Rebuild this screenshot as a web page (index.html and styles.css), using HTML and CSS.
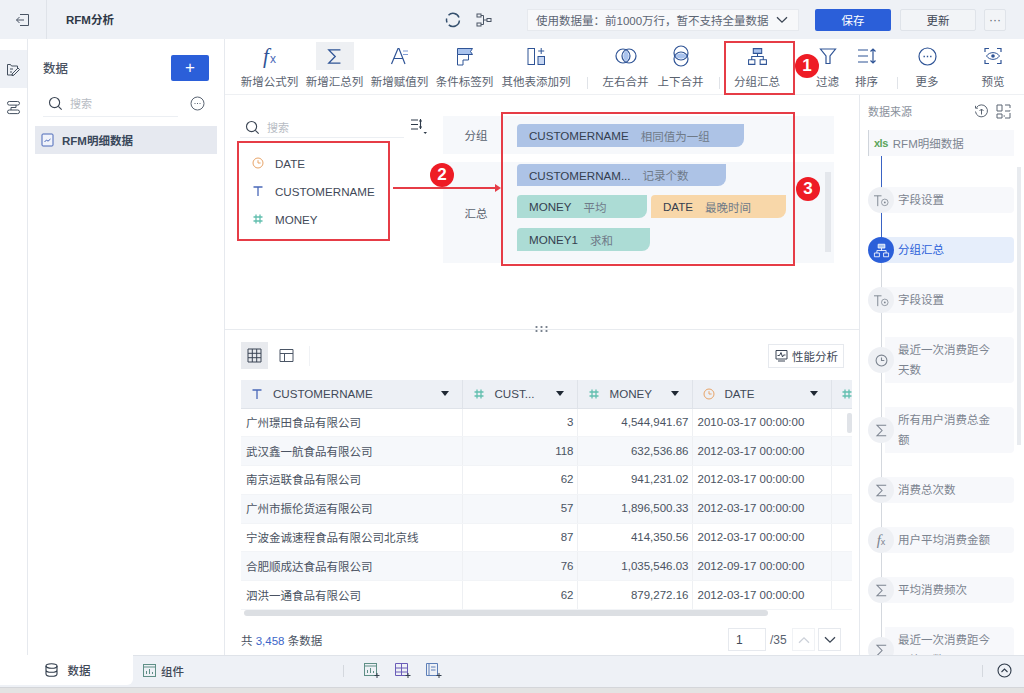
FILE: index.html
```html
<!DOCTYPE html>
<html lang="zh-CN">
  <head>
    <meta charset="UTF-8" />
    <title>RFM分析</title>
    <link rel="stylesheet" href="styles.css">
  </head>
  <body>
    <svg class="defs" width="0" height="0">
      <symbol id="i-sigma" viewBox="0 0 16 16"><path d="M13 2.5H3.2L8.6 8l-5.4 5.5H13" fill="none" stroke="currentColor" stroke-width="1.1"/></symbol>
      <symbol id="i-hash" viewBox="0 0 12 12"><path d="M4 1.5v9M8 1.5v9M1.5 4h9M1.5 8h9" fill="none" stroke="currentColor" stroke-width="1.3"/></symbol>
      <symbol id="i-text" viewBox="0 0 12 12"><path d="M1.5 2h9M6 2v9" fill="none" stroke="currentColor" stroke-width="1.3"/></symbol>
      <symbol id="i-clock" viewBox="0 0 12 12"><circle cx="6" cy="6" r="5" fill="none" stroke="currentColor"/><path d="M6 3.2V6h2.6" fill="none" stroke="currentColor"/></symbol>
      <symbol id="i-search" viewBox="0 0 16 16"><circle cx="7" cy="7" r="5.4" fill="none" stroke="currentColor" stroke-width="1.2"/><path d="M11 11l3.6 3.6" stroke="currentColor" stroke-width="1.2"/></symbol>
      <symbol id="i-tsetting" viewBox="0 0 18 16"><path d="M1 3h8M5 3v11" fill="none" stroke="currentColor"/><circle cx="12.5" cy="10" r="3.5" fill="none" stroke="currentColor" stroke-width=".8"/><circle cx="12.5" cy="10" r="1" fill="currentColor"/></symbol>
      <symbol id="i-group" viewBox="0 0 20 18"><path d="M6 1.5h8V6H6z" fill="#a9c3ee" stroke="currentColor"/><path d="M1.5 12h6v4.5h-6zM12.5 12h6v4.5h-6zM10 6v3M4.5 12V9h11v3" fill="none" stroke="currentColor"/></symbol>
    </svg>

    <header class="topbar">
      <div class="back-cell">
        <svg width="16" height="16" viewBox="0 0 16 16"><path d="M5 2.5h8.5v11H5M9 8H1.5M4.5 5L1.5 8l3 3" fill="none" stroke="#4a5565"/></svg>
      </div>
      <div class="doc-title">RFM分析</div>
      <div class="top-tools">
        <svg width="16" height="16" viewBox="0 0 16 16"><path d="M3.5 3.2A6.4 6.4 0 0 1 14 5.5M14.4 8.5a6.4 6.4 0 0 1-10.6 4.4M2 10.5a6.4 6.4 0 0 1-.3-4" fill="none" stroke="#35506e" stroke-width="1.5"/></svg>
        <svg width="16" height="14" viewBox="0 0 16 14"><rect x="1" y="1" width="4" height="3" fill="none" stroke="#4a5565"/><rect x="1" y="10" width="4" height="3" fill="none" stroke="#4a5565"/><rect x="11" y="5.5" width="4" height="3" fill="none" stroke="#4a5565"/><path d="M5 2.5h2.5v9H5M7.5 7H11" fill="none" stroke="#4a5565"/></svg>
      </div>
      <div class="data-limit">
        <span>使用数据量：前1000万行，暂不支持全量数据</span>
        <svg width="12" height="8" viewBox="0 0 12 8"><path d="M1 1.2l5 5 5-5" fill="none" stroke="#3c4654" stroke-width="1.3"/></svg>
      </div>
      <button class="btn-save">保存</button>
      <button class="btn-update">更新</button>
      <button class="btn-dots">···</button>
    </header>

    <div class="workspace">
      <nav class="rail">
        <div class="rail-item active">
          <svg width="15" height="15" viewBox="0 0 15 15"><path d="M1.5 13V2.5h3l1 1.5h6v2M1.5 13h6M6 12l6-6 1.5 1.500-6 6H6zM4 7h3M4 10h2" fill="none" stroke="#44505f"/></svg>
        </div>
        <div class="rail-item">
          <svg width="15" height="15" viewBox="0 0 15 15"><rect x="1.5" y="1.5" width="12" height="3.6" rx="1.8" fill="none" stroke="#44505f"/><rect x="1.5" y="10" width="12" height="3.6" rx="1.8" fill="none" stroke="#44505f"/><path d="M10 5v2.500H5V10" fill="none" stroke="#44505f"/></svg>
        </div>
      </nav>

      <aside class="data-panel">
        <div class="data-head">
          <span class="data-title">数据</span>
          <button class="btn-add">+</button>
        </div>
        <div class="data-search">
          <div class="search-box">
            <svg class="search-icon" width="15" height="15"><use href="#i-search"/></svg>
            <span>搜索</span>
          </div>
          <svg width="15" height="15" viewBox="0 0 15 15"><circle cx="7.5" cy="7.5" r="6.5" fill="none" stroke="#5a6472"/><path d="M4.5 7.5h1M7 7.5h1M9.5 7.5h1" stroke="#5a6472"/></svg>
        </div>
        <div class="table-item">
          <svg width="13" height="14" viewBox="0 0 13 14"><rect x="1" y="1" width="11" height="12" rx="1" fill="#f0f3fb" stroke="#4a68b8"/><path d="M3.5 9l2-2 1.5 1.2L9.5 6" fill="none" stroke="#4a68b8"/></svg>
          <span>RFM明细数据</span>
        </div>
      </aside>

      <main class="editor">
        <div class="toolbar">
          <div class="tool w65">
            <span class="tool-fx">f<small>x</small></span>
            <span class="tool-label">新增公式列</span>
          </div>
          <div class="tool w65">
            <span class="tool-icon on"><svg width="19" height="19"><use href="#i-sigma"/></svg></span>
            <span class="tool-label">新增汇总列</span>
          </div>
          <div class="tool w65">
            <span class="tool-icon">
              <svg width="20" height="20" viewBox="0 0 20 20"><path d="M1.5 18L8 2.5h1L15 18M4 12.5h9" fill="none" stroke="#2f5496" stroke-width="1.2"/><path d="M13 5h5M13 8.5h5" stroke="#7f9bd6" stroke-width="1.2"/></svg>
            </span>
            <span class="tool-label">新增赋值列</span>
          </div>
          <div class="tool w65">
            <span class="tool-icon">
              <svg width="18" height="19" viewBox="0 0 18 19"><path d="M1.5 1.5h15l-2 3 2 3H1.5z" fill="#a9c3ee" stroke="#2f5496"/><path d="M1.5 7.5V18H7v-5h5.500V7.500" fill="none" stroke="#2f5496"/></svg>
            </span>
            <span class="tool-label">条件标签列</span>
          </div>
          <div class="tool w78">
            <span class="tool-icon">
              <svg width="19" height="19" viewBox="0 0 19 19"><rect x="1" y="1.5" width="6.5" height="16" fill="none" stroke="#2f5496"/><rect x="11" y="9.500" width="6.500" height="8" fill="#c6d6f2" stroke="#2f5496"/><path d="M14.200 1v6M11.200 4h6" stroke="#2f5496"/></svg>
            </span>
            <span class="tool-label">其他表添加列</span>
          </div>
          <i class="tool-sep sep-a"></i>
          <div class="tool w55">
            <span class="tool-icon">
              <svg width="22" height="18" viewBox="0 0 22 18"><circle cx="8" cy="9" r="7" fill="none" stroke="#2f5496" stroke-width="1.2"/><circle cx="14" cy="9" r="7" fill="none" stroke="#2f5496" stroke-width="1.2"/><path d="M11 3.400a7 7 0 0 1 0 11.200a7 7 0 0 1 0-11.200z" fill="#a9c3ee"/></svg>
            </span>
            <span class="tool-label">左右合并</span>
          </div>
          <div class="tool w55">
            <span class="tool-icon">
              <svg width="18" height="22" viewBox="0 0 18 22"><circle cx="9" cy="8" r="7" fill="none" stroke="#2f5496" stroke-width="1.2"/><circle cx="9" cy="14" r="7" fill="none" stroke="#2f5496" stroke-width="1.2"/><path d="M3.400 11a7 7 0 0 1 11.200 0a7 7 0 0 1-11.200 0z" fill="#a9c3ee"/></svg>
            </span>
            <span class="tool-label">上下合并</span>
          </div>
          <i class="tool-sep sep-b"></i>
          <div class="tool w72">
            <span class="tool-icon blue"><svg width="21" height="19"><use href="#i-group"/></svg></span>
            <span class="tool-label">分组汇总</span>
          </div>
          <div class="tool w39 gap-filter">
            <span class="tool-icon">
              <svg width="18" height="18" viewBox="0 0 18 18"><path d="M1.500 2h15L11 9v7.500H7V9z" fill="none" stroke="#2f5496" stroke-width="1.2"/></svg>
            </span>
            <span class="tool-label">过滤</span>
          </div>
          <div class="tool w39">
            <span class="tool-icon">
              <svg width="20" height="18" viewBox="0 0 20 18"><path d="M1 3h10M1 9h10M1 15h10" stroke="#2f5496" stroke-width="1.2"/><path d="M16 2v14M13.500 4.500L16 2l2.500 2.500M13.500 13.500L16 16l2.500-2.500" fill="none" stroke="#2f5496" stroke-width="1.2"/></svg>
            </span>
            <span class="tool-label">排序</span>
          </div>
          <i class="tool-sep sep-c"></i>
          <div class="tool w50">
            <span class="tool-icon">
              <svg width="19" height="19" viewBox="0 0 19 19"><circle cx="9.500" cy="9.500" r="8.500" fill="none" stroke="#2f5496" stroke-width="1.2"/><path d="M5.500 9.500h1.400M8.800 9.500h1.400M12.100 9.500h1.400" stroke="#2f5496" stroke-width="1.4"/></svg>
            </span>
            <span class="tool-label">更多</span>
          </div>
          <div class="tool w50 gap-preview">
            <span class="tool-icon">
              <svg width="18" height="18" viewBox="0 0 18 18"><path d="M1 5V1.500h4M13 1.500h4V5M17 13v3.500h-4M5 16.500H1V13" fill="none" stroke="#2f5496" stroke-width="1.2"/><path d="M2.500 9C5.500 4.500 12.500 4.500 15.500 9C12.500 13.500 5.500 13.500 2.500 9z" fill="none" stroke="#2f5496"/><circle cx="9" cy="9" r="1.800" fill="#2f5496"/></svg>
            </span>
            <span class="tool-label">预览</span>
          </div>
        </div>

        <div class="editor-body">
          <div class="center">
            <section class="config">
              <div class="fields">
                <div class="field-search">
                  <div class="search-box">
                    <svg class="search-icon" width="15" height="15"><use href="#i-search"/></svg>
                    <span>搜索</span>
                  </div>
                  <svg class="sort-mini" width="18" height="18" viewBox="0 0 18 18"><path d="M1 3h7M1 7.500h7M1 12h7" stroke="#2f3b4a" stroke-width="1.1"/><path d="M10.500 2v10M9 4h3M9 10h3" stroke="#2f3b4a" stroke-width="1.1"/><path d="M13.500 15H17l-1.750 2z" fill="#2f3b4a"/></svg>
                </div>
                <ul class="field-list">
                  <li><svg class="c-date" width="12" height="12"><use href="#i-clock"/></svg>DATE</li>
                  <li><svg class="c-text" width="12" height="12"><use href="#i-text"/></svg>CUSTOMERNAME</li>
                  <li><svg class="c-num" width="12" height="12"><use href="#i-hash"/></svg>MONEY</li>
                </ul>
              </div>

              <div class="zones">
                <div class="zone zone-group">
                  <div class="zone-label">分组</div>
                  <div class="chips">
                    <span class="chip blue c1">CUSTOMERNAME<em>相同值为一组</em></span>
                  </div>
                </div>
                <div class="zone zone-sum">
                  <div class="zone-label">汇总</div>
                  <div class="chips">
                    <span class="chip blue c2">CUSTOMERNAM...<em>记录个数</em></span>
                    <span class="chip green c3">MONEY<em>平均</em></span>
                    <span class="chip orange c4">DATE<em>最晚时间</em></span>
                    <span class="chip green c5">MONEY1<em>求和</em></span>
                  </div>
                  <i class="zone-scroll"></i>
                </div>
              </div>
              <i class="v-dots"></i>
            </section>

            <section class="preview">
              <div class="preview-head">
                <span class="view-btn on">
                  <svg width="15" height="15" viewBox="0 0 15 15"><path d="M1 1h13v13H1zM1 5.300h13M1 9.700h13M5.300 1v13M9.700 1v13" fill="none" stroke="#3a4454"/></svg>
                </span>
                <span class="view-btn">
                  <svg width="15" height="15" viewBox="0 0 15 15"><path d="M1 1.500h13v12H1zM1 5.500h13M5.500 5.500v8" fill="none" stroke="#4a5565"/></svg>
                </span>
                <i class="head-sep"></i>
                <button class="btn-perf">
                  <svg width="13" height="13" viewBox="0 0 13 13"><path d="M1 1.500h11V10H1zM3 12h7M2.500 6.500h2L6 3.500 7.500 8l1-2h2" fill="none" stroke="#3a4454"/></svg>
                  性能分析
                </button>
              </div>

              <div class="grid-wrap">
                <table class="grid">
                  <colgroup><col class="col-a"><col class="col-b"><col class="col-b"><col class="col-c"><col class="col-d"></colgroup>
                  <thead>
                    <tr>
                      <th><div class="th-in"><svg class="c-text" width="12" height="12"><use href="#i-text"/></svg><span>CUSTOMERNAME</span><b></b></div></th>
                      <th><div class="th-in"><svg class="c-num" width="12" height="12"><use href="#i-hash"/></svg><span>CUST...</span><b></b></div></th>
                      <th><div class="th-in"><svg class="c-num" width="12" height="12"><use href="#i-hash"/></svg><span>MONEY</span><b></b></div></th>
                      <th><div class="th-in"><svg class="c-date" width="12" height="12"><use href="#i-clock"/></svg><span>DATE</span><b></b></div></th>
                      <th><div class="th-in th-cut"><svg class="c-num" width="12" height="12"><use href="#i-hash"/></svg></div></th>
                    </tr>
                  </thead>
                  <tbody>
                    <tr><td>广州璟田食品有限公司</td><td class="num">3</td><td class="num">4,544,941.67</td><td>2010-03-17 00:00:00</td><td></td></tr>
                    <tr><td>武汉鑫一航食品有限公司</td><td class="num">118</td><td class="num">632,536.86</td><td>2012-03-17 00:00:00</td><td></td></tr>
                    <tr><td>南京运联食品有限公司</td><td class="num">62</td><td class="num">941,231.02</td><td>2012-03-17 00:00:00</td><td></td></tr>
                    <tr><td>广州市振伦货运有限公司</td><td class="num">57</td><td class="num">1,896,500.33</td><td>2012-03-17 00:00:00</td><td></td></tr>
                    <tr><td>宁波金诚速程食品有限公司北京线</td><td class="num">87</td><td class="num">414,350.56</td><td>2012-03-17 00:00:00</td><td></td></tr>
                    <tr><td>合肥顺成达食品有限公司</td><td class="num">76</td><td class="num">1,035,546.03</td><td>2012-09-17 00:00:00</td><td></td></tr>
                    <tr><td>泗洪一通食品有限公司</td><td class="num">62</td><td class="num">879,272.16</td><td>2012-03-17 00:00:00</td><td></td></tr>
                  </tbody>
                </table>
                <i class="grid-vscroll"></i>
                <i class="grid-hscroll"></i>
              </div>

              <div class="pager-row">
                <span class="total">共 <a>3,458</a> 条数据</span>
                <div class="pager">
                  <span class="page-input">1</span>
                  <span class="page-count">/35</span>
                  <span class="page-btn off"><svg width="12" height="8" viewBox="0 0 12 8"><path d="M1 6.800l5-5 5 5" fill="none" stroke="#ccd1d9" stroke-width="1.3"/></svg></span>
                  <span class="page-btn"><svg width="12" height="8" viewBox="0 0 12 8"><path d="M1 1.200l5 5 5-5" fill="none" stroke="#3c4654" stroke-width="1.3"/></svg></span>
                </div>
              </div>
            </section>
          </div>

          <aside class="steps-panel">
            <div class="steps-head">
              <span>数据来源</span>
              <svg width="15" height="15" viewBox="0 0 15 15"><path d="M2.500 3.500a6 6 0 1 1-1 4M1.500 1.800v2.400h2.400M7.500 10.500V5M5.500 7l2-2 2 2" fill="none" stroke="#5a6472"/></svg>
              <svg width="15" height="15" viewBox="0 0 15 15"><path d="M1 1h5v6H1zM9 1h5v3M14 6.500V7H9M1 10h5v4H1zM9 12H7.500M14 9v5H9" fill="none" stroke="#5a6472"/></svg>
            </div>
            <div class="source-row"><b>xls</b>RFM明细数据</div>
            <ol class="steps">
              <li class="step done"><span class="step-icon"><svg width="17" height="15"><use href="#i-tsetting"/></svg></span><span class="step-text">字段设置</span></li>
              <li class="step done current"><span class="step-icon"><svg width="17" height="15"><use href="#i-group"/></svg></span><span class="step-text">分组汇总</span></li>
              <li class="step"><span class="step-icon"><svg width="17" height="15"><use href="#i-tsetting"/></svg></span><span class="step-text">字段设置</span></li>
              <li class="step"><span class="step-icon"><svg width="13" height="13"><use href="#i-clock"/></svg></span><span class="step-text">最近一次消费距今天数</span></li>
              <li class="step"><span class="step-icon"><svg width="15" height="15"><use href="#i-sigma"/></svg></span><span class="step-text">所有用户消费总金额</span></li>
              <li class="step"><span class="step-icon"><svg width="15" height="15"><use href="#i-sigma"/></svg></span><span class="step-text">消费总次数</span></li>
              <li class="step"><span class="step-icon fx">f<small>x</small></span><span class="step-text">用户平均消费金额</span></li>
              <li class="step"><span class="step-icon"><svg width="15" height="15"><use href="#i-sigma"/></svg></span><span class="step-text">平均消费频次</span></li>
              <li class="step"><span class="step-icon"><svg width="15" height="15"><use href="#i-sigma"/></svg></span><span class="step-text">最近一次消费距今平均天数</span></li>
            </ol>
            <i class="steps-scroll"></i>
          </aside>
        </div>
      </main>
    </div>

    <footer class="tabbar">
      <div class="tab active">
        <svg width="13" height="14" viewBox="0 0 13 14"><ellipse cx="6.500" cy="3" rx="5.500" ry="2.300" fill="none" stroke="#2f3b4a" stroke-width="1.1"/><path d="M1 3v8c0 1.300 2.500 2.300 5.500 2.300S12 12.300 12 11V3M1 7c0 1.300 2.500 2.300 5.500 2.300S12 8.300 12 7" fill="none" stroke="#2f3b4a" stroke-width="1.1"/></svg>
        <span>数据</span>
      </div>
      <div class="tab">
        <svg width="13" height="13" viewBox="0 0 13 13"><rect x=".5" y=".5" width="12" height="12" fill="none" stroke="#5f8f86"/><path d="M.5 3h12M3.500 10V7M6.500 10V5M9.500 10V8" stroke="#5f8f86"/></svg>
        <span>组件</span>
      </div>
      <i class="bar-sep first"></i>
      <div class="bar-icons">
        <svg width="16" height="15" viewBox="0 0 16 15"><rect x=".5" y=".5" width="12" height="12" fill="none" stroke="#5f8f86"/><path d="M.5 3h12M3.500 10V7M6.500 10V5M9.500 10V8" stroke="#5f8f86"/><path d="M13 10v5M10.500 12.500h5" stroke="#34404f"/></svg>
        <svg width="16" height="15" viewBox="0 0 16 15"><path d="M.5.500h12v12H.5zM.5 5h12M.5 9h12M6.500.5v12" fill="none" stroke="#6a5cb8"/><path d="M13 10v5M10.500 12.500h5" stroke="#34404f"/></svg>
        <svg width="16" height="15" viewBox="0 0 16 15"><path d="M.5.500h11v12H.5zM3 .5v12M5 4h4.500M5 7h4.500" fill="none" stroke="#5d7fb8"/><path d="M13 10v5M10.500 12.500h5" stroke="#34404f"/></svg>
      </div>
      <i class="bar-sep last"></i>
      <svg class="bar-up" width="15" height="15" viewBox="0 0 15 15"><circle cx="7.500" cy="7.500" r="6.500" fill="none" stroke="#2f3b4a" stroke-width="1.1"/><path d="M4.500 9l3-3 3 3" fill="none" stroke="#2f3b4a" stroke-width="1.1"/></svg>
    </footer>
    <div class="window-edge"></div>

    <div class="mark box-1"></div>
    <div class="mark box-2"></div>
    <div class="mark box-3"></div>
    <div class="arrow"></div>
    <div class="badge badge-1">1</div>
    <div class="badge badge-2">2</div>
    <div class="badge badge-3">3</div>
  </body>
</html>
```

FILE: styles.css
```css
* {
  box-sizing: border-box;
}

html,
body {
  margin: 0;
  height: 693px;
  overflow: hidden;
}

body {
  position: relative;
  display: flex;
  flex-direction: column;
  width: 1024px;
  background: #fff;
  color: #4a5362;
  font-family: "Liberation Sans", "Noto Sans CJK SC", sans-serif;
  font-size: 12px;
}

button {
  font-family: inherit;
  cursor: pointer;
}

ul,
ol {
  margin: 0;
  padding: 0;
  list-style: none;
}

em {
  font-style: normal;
}

.defs {
  position: absolute;
}

.c-date {
  color: #e8a468;
}

.c-text {
  color: #4a68b8;
}

.c-num {
  color: #62bfae;
}

/* top bar */
.topbar {
  display: flex;
  align-items: center;
  flex: none;
  height: 39px;
  background: #eef1f6;
}

.back-cell {
  display: flex;
  align-items: center;
  justify-content: center;
  width: 47px;
  height: 100%;
  border-right: 1px solid #dfe3e9;
}

.doc-title {
  flex: 1;
  padding: 0 0 2px 19px;
  color: #2e3846;
  font-weight: bold;
  font-size: 11.5px;
}

.top-tools {
  display: flex;
  align-items: center;
  gap: 15px;
  margin-right: 35px;
}

.data-limit {
  display: flex;
  align-items: center;
  justify-content: space-between;
  width: 272px;
  height: 22px;
  padding: 0 10px 0 8px;
  border: 1px solid #e6e9ee;
  background: #f7f8fa;
  color: #5c6573;
  font-size: 11.5px;
}

.btn-save {
  width: 76px;
  height: 22px;
  margin-left: 16px;
  border: 0;
  border-radius: 2px;
  background: #2b5fd9;
  color: #fff;
  font-size: 11.5px;
}

.btn-update {
  width: 76px;
  height: 22px;
  margin-left: 9px;
  border: 1px solid #dfe3e9;
  border-radius: 2px;
  background: #f2f4f7;
  color: #3c4654;
  font-size: 11.5px;
}

.btn-dots {
  width: 22px;
  height: 22px;
  margin: 0 18px 0 8px;
  padding: 0;
  border: 1px solid #dfe3e9;
  border-radius: 2px;
  background: #f2f4f7;
  color: #5a6472;
  font-size: 12px;
}

/* main columns */
.workspace {
  display: flex;
  flex: 1;
  min-height: 0;
}

.rail {
  flex: none;
  width: 28px;
  padding-top: 11px;
  border-right: 1px solid #e6e9ee;
}

.rail-item {
  display: flex;
  align-items: center;
  justify-content: center;
  height: 38px;
}

.rail-item.active {
  background: #eef1f6;
}

.data-panel {
  flex: none;
  width: 197px;
  padding: 16px 7px 0;
  border-right: 1px solid #e6e9ee;
}

.data-head {
  display: flex;
  align-items: center;
  justify-content: space-between;
  height: 26px;
  padding: 0 8px;
}

.data-title {
  padding-bottom: 2px;
  color: #4a5362;
  font-weight: 500;
  font-size: 12.5px;
}

.btn-add {
  width: 38px;
  height: 26px;
  padding: 0;
  border: 0;
  border-radius: 2px;
  background: #2b5fd9;
  color: #fff;
  font-size: 17px;
  line-height: 26px;
}

.data-search {
  display: flex;
  align-items: center;
  gap: 12px;
  margin: 9px 0 9px 8px;
}

.search-box {
  display: flex;
  align-items: center;
  gap: 7px;
  height: 27px;
  padding-left: 5px;
  border-bottom: 1px solid #eceff3;
  color: #b7bcc4;
  font-size: 11px;
}

.search-icon {
  flex: none;
  color: #3c4654;
}

.data-search .search-box {
  width: 135px;
}

.table-item {
  display: flex;
  align-items: center;
  gap: 8px;
  width: 182px;
  height: 28px;
  padding-left: 6px;
  background: #e6e9f0;
  color: #39475a;
  font-weight: bold;
  font-size: 11.5px;
}

.editor {
  display: flex;
  flex-direction: column;
  flex: 1;
  min-width: 0;
}

/* toolbar */
.toolbar {
  display: flex;
  flex: none;
  height: 56px;
  padding: 3px 0 0 12px;
  border-bottom: 1px solid #eef0f3;
}

.tool {
  display: flex;
  flex-direction: column;
  align-items: center;
  flex: none;
}

.w65 { width: 65px; }
.w78 { width: 78px; }
.w55 { width: 55px; }
.w72 { width: 72px; }
.w39 { width: 39px; }
.w50 { width: 50px; }

.tool-sep {
  flex: none;
  align-self: flex-start;
  width: 1px;
  height: 12px;
  margin-top: 35px;
  background: #e0e3e8;
}

.sep-a { margin-left: 12px; margin-right: 10px; }
.sep-b { margin-left: 11px; margin-right: 1px; }
.sep-c { margin-left: 11px; margin-right: 4px; }

.gap-filter { margin-left: 15px; }
.gap-preview { margin-left: 16px; }

.tool-icon,
.tool-fx {
  display: flex;
  align-items: center;
  justify-content: center;
  width: 38px;
  height: 28px;
  color: #2f5496;
}

.tool-icon.on {
  background: #eef0f3;
}

.tool-fx {
  font-family: "Liberation Serif", serif;
  font-style: italic;
  font-size: 21px;
}

.tool-fx small {
  margin: 6px 0 0 1px;
  color: #4a68b8;
  font-style: normal;
  font-family: "Liberation Sans", sans-serif;
  font-size: 12px;
}

.tool-label {
  margin-top: 4px;
  color: #59626f;
  font-size: 11.5px;
  line-height: 16px;
  white-space: nowrap;
}

.editor-body {
  display: flex;
  flex: 1;
  min-height: 0;
}

.center {
  display: flex;
  flex-direction: column;
  flex: none;
  width: 634px;
}

/* config area */
.config {
  display: flex;
  position: relative;
  flex: none;
  height: 235px;
  padding: 16px 0 0 15px;
  border-bottom: 1px solid #e8ebef;
}

.fields {
  flex: none;
  width: 188px;
}

.field-search {
  display: flex;
  align-items: flex-start;
}

.field-search .search-box {
  width: 165px;
  padding: 6px 0 0 5px;
}

.sort-mini {
  flex: none;
  margin: 6px 0 0 6px;
}

.field-list {
  padding: 11px 0 0 12px;
}

.field-list li {
  display: flex;
  align-items: center;
  gap: 11px;
  height: 28px;
  color: #3f4957;
  font-size: 11.6px;
}

.zones {
  flex: none;
  width: 391px;
  margin-left: 15px;
  padding-top: 5px;
}

.zone {
  display: flex;
  position: relative;
  background: #f6f8fb;
}

.zone-group {
  height: 38px;
  margin-bottom: 8px;
}

.zone-sum {
  height: 101px;
}

.zone-label {
  flex: none;
  align-self: center;
  width: 74px;
  padding-right: 8px;
  color: #59626f;
  text-align: center;
  font-size: 11.5px;
}

.chips {
  display: flex;
  flex-wrap: wrap;
  align-content: flex-start;
  column-gap: 4px;
  row-gap: 10px;
  padding-top: 8px;
}

.zone-sum .chips {
  padding-top: 2px;
}

.chip {
  display: flex;
  align-items: center;
  height: 23px;
  padding-left: 12px;
  border-radius: 4px 0 8px 0;
  color: #34404f;
  font-size: 11.6px;
  white-space: nowrap;
}

.chip em {
  margin-left: 12px;
  color: #6f7a88;
  font-size: 11.5px;
}

.chip.blue { background: #adc3e6; }
.chip.green { background: #acdcd5; }
.chip.orange { background: #f8d7a9; }

.c1 { width: 227px; }
.c2 { width: 209px; margin-right: 60px; margin-bottom: -1px; height: 22px; }
.c3 { width: 130px; }
.c4 { width: 135px; }
.c5 { width: 133px; }

.zone-scroll {
  position: absolute;
  top: 10px;
  right: 3px;
  width: 6px;
  height: 80px;
  background: #e4e7ec;
}

.v-dots {
  position: absolute;
  left: 309px;
  bottom: -3px;
  width: 14px;
  height: 7px;
  background: radial-gradient(circle, #7a838f 1px, transparent 1.2px) 0 0 / 5px 4px;
}

/* preview table */
.preview {
  display: flex;
  flex-direction: column;
  flex: 1;
  min-height: 0;
  padding: 12px 0 0 16px;
}

.preview-head {
  display: flex;
  align-items: center;
  flex: none;
  height: 27px;
  gap: 4px;
}

.view-btn {
  display: flex;
  align-items: center;
  justify-content: center;
  width: 27px;
  height: 27px;
}

.view-btn:nth-child(2) {
  margin-left: 1px;
}

.view-btn.on {
  background: #e8eaee;
}

.head-sep {
  width: 1px;
  height: 20px;
  margin-left: 5px;
  background: #f0f2f5;
}

.btn-perf {
  display: flex;
  align-items: center;
  gap: 4px;
  width: 76px;
  height: 24px;
  margin-left: auto;
  margin-right: 15px;
  padding: 0 0 0 6px;
  border: 1px solid #e6e9ee;
  background: #fff;
  color: #3f4957;
  font-size: 11.5px;
}

.grid-wrap {
  position: relative;
  flex: none;
  width: 611px;
  height: 237px;
  margin-top: 11px;
  overflow: hidden;
}

.grid {
  width: 611px;
  border-collapse: collapse;
  table-layout: fixed;
}

.col-a { width: 221px; }
.col-b { width: 115px; }
.col-c { width: 139px; }
.col-d { width: 21px; }

.grid th {
  height: 28px;
  padding: 0;
  border-right: 1px solid #dfe3e9;
  border-bottom: 1px solid #dfe3e9;
  background: #edf0f5;
  color: #3f4957;
  font-weight: normal;
  font-size: 11.6px;
  text-align: left;
}

.th-in {
  display: flex;
  align-items: center;
  gap: 10px;
  padding: 0 13px 0 10px;
}

.th-in svg {
  flex: none;
}

.th-in span {
  flex: 1;
}

.th-in.th-cut {
  padding: 0 0 0 9px;
  overflow: hidden;
}

.th-in b {
  border-top: 5px solid #1f2833;
  border-left: 4px solid transparent;
  border-right: 4px solid transparent;
}

.grid td {
  height: 28.8px;
  padding: 0 4px 1px 5px;
  border-right: 1px solid #eef0f3;
  border-bottom: 1px solid #f2f4f7;
  color: #4a5362;
  font-size: 11.5px;
  white-space: nowrap;
  overflow: hidden;
}

.grid tbody tr:nth-child(even) td {
  background: #f6f8fb;
}

.grid td.num {
  text-align: right;
  padding-right: 3px;
}

.grid-vscroll {
  position: absolute;
  top: 33px;
  right: 0;
  width: 5px;
  height: 20px;
  border-radius: 2px;
  background: #e0e3e8;
}

.grid-hscroll {
  position: absolute;
  top: 230px;
  left: 3px;
  width: 524px;
  height: 6px;
  border-radius: 3px;
  background: #dcdfe3;
}

.pager-row {
  display: flex;
  align-items: center;
  justify-content: space-between;
  flex: 1;
  padding: 7px 18px 0 0;
}

.total {
  color: #4a5362;
  font-size: 11.5px;
}

.total a {
  color: #3c66c8;
}

.pager {
  display: flex;
  align-items: center;
  gap: 3px;
}

.page-input {
  width: 38px;
  height: 23px;
  margin-right: 1px;
  padding-left: 7px;
  border: 1px solid #e6e9ee;
  color: #3f4957;
  line-height: 22px;
}

.page-count {
  width: 19px;
  color: #59626f;
}

.page-btn {
  display: flex;
  align-items: center;
  justify-content: center;
  width: 23px;
  height: 23px;
  border: 1px solid #e6e9ee;
}

.page-btn.off {
  border-color: #f0f2f5;
}

/* right steps */
.steps-panel {
  position: relative;
  flex: none;
  width: 165px;
  padding: 8px 10px 0 8px;
  overflow: hidden;
  border-left: 1px solid #e6e9ee;
}

.steps-head {
  display: flex;
  align-items: center;
  gap: 7px;
  height: 16px;
  margin-right: 3px;
  color: #8a919c;
  font-size: 11px;
}

.steps-head span {
  flex: 1;
}

.source-row {
  display: flex;
  align-items: center;
  gap: 5px;
  height: 26px;
  margin-top: 11px;
  padding-left: 5px;
  border-left: 1px solid #cfd4db;
  background: #f7f8fb;
  color: #7c8490;
  font-size: 11.5px;
}

.source-row b {
  color: #5aa55a;
  font-size: 11px;
  letter-spacing: -0.5px;
}

.steps {
  display: flex;
  flex-direction: column;
  gap: 24px;
  padding-top: 31px;
}

.step {
  display: flex;
  align-items: center;
  position: relative;
  flex: none;
  min-height: 26px;
}

.step::before {
  content: "";
  position: absolute;
  left: 13px;
  bottom: 50%;
  width: 1px;
  height: 60px;
  background: #d4d8de;
}

.step.done::before {
  background: #3a63c4;
  height: 50px;
}

.step:first-child::before {
  height: 44px;
}

.step-icon {
  display: flex;
  align-items: center;
  justify-content: center;
  position: relative;
  z-index: 1;
  flex: none;
  width: 26px;
  height: 26px;
  border-radius: 50%;
  background: #eef0f4;
  color: #7c8490;
}

.step-icon.fx {
  font-family: "Liberation Serif", serif;
  font-style: italic;
  font-size: 15px;
}

.step-icon small {
  font-family: "Liberation Sans", sans-serif;
  font-style: normal;
  font-size: 9px;
  margin-top: 4px;
}

.step-text {
  flex: 1;
  margin-left: -9px;
  padding: 3px 16px 3px 13px;
  border-radius: 0 4px 4px 0;
  background: #f7f8fb;
  color: #7c8490;
  font-size: 11.5px;
  line-height: 20px;
}

.step.current .step-icon {
  background: #2b5fd9;
  color: #fff;
}

.step.current .step-text {
  background: #e6eefb;
  color: #2b5fd9;
}

.steps-scroll {
  position: absolute;
  top: 72px;
  right: 3px;
  width: 4px;
  height: 278px;
  background: #e8ebef;
}

/* bottom bar */
.tabbar {
  display: flex;
  align-items: center;
  flex: none;
  height: 32px;
  padding-bottom: 2px;
  border-top: 1px solid #dfe3e9;
  background: #eef1f6;
}

.tab {
  display: flex;
  align-items: center;
  gap: 8px;
  height: 100%;
  color: #3f4957;
  font-size: 11.5px;
  font-weight: 500;
}

.tab.active {
  align-self: flex-start;
  justify-content: center;
  width: 133px;
  height: 30px;
  margin-top: -1px;
  padding-left: 2px;
  gap: 10px;
  border-radius: 0 0 6px 0;
  background: #fff;
}

.tab:not(.active) {
  margin-left: 10px;
  gap: 5px;
}

.bar-sep {
  width: 1px;
  height: 12px;
  background: #d4d8de;
}

.bar-sep.first {
  margin-left: 159px;
}

.bar-icons {
  display: flex;
  gap: 15px;
  margin-left: 20px;
}

.bar-sep.last {
  margin-left: auto;
}

.bar-up {
  margin: 0 12px 0 14px;
}

.window-edge {
  flex: none;
  height: 6px;
  border-top: 1px solid #d4d6da;
  background: #e3e3e3;
}

/* annotations on top of the shot */
.mark {
  position: absolute;
  border: 2px solid #e63c46;
}

.box-1 { left: 724px; top: 41px; width: 71px; height: 54px; }
.box-2 { left: 237px; top: 141px; width: 153px; height: 100px; }
.box-3 { left: 501px; top: 112px; width: 294px; height: 154px; }

.arrow {
  position: absolute;
  left: 393px;
  top: 187px;
  width: 102px;
  height: 2px;
  background: #e63c46;
}

.arrow::after {
  content: "";
  position: absolute;
  right: -6px;
  top: -3px;
  border-left: 6px solid #e63c46;
  border-top: 4px solid transparent;
  border-bottom: 4px solid transparent;
}

.badge {
  position: absolute;
  width: 24px;
  height: 24px;
  border-radius: 50%;
  background: #ee1c25;
  color: #fff;
  font-weight: bold;
  font-size: 17px;
  line-height: 24px;
  text-align: center;
}

.badge-1 { left: 795px; top: 54px; }
.badge-2 { left: 430px; top: 163px; }
.badge-3 { left: 796px; top: 177px; }
```
